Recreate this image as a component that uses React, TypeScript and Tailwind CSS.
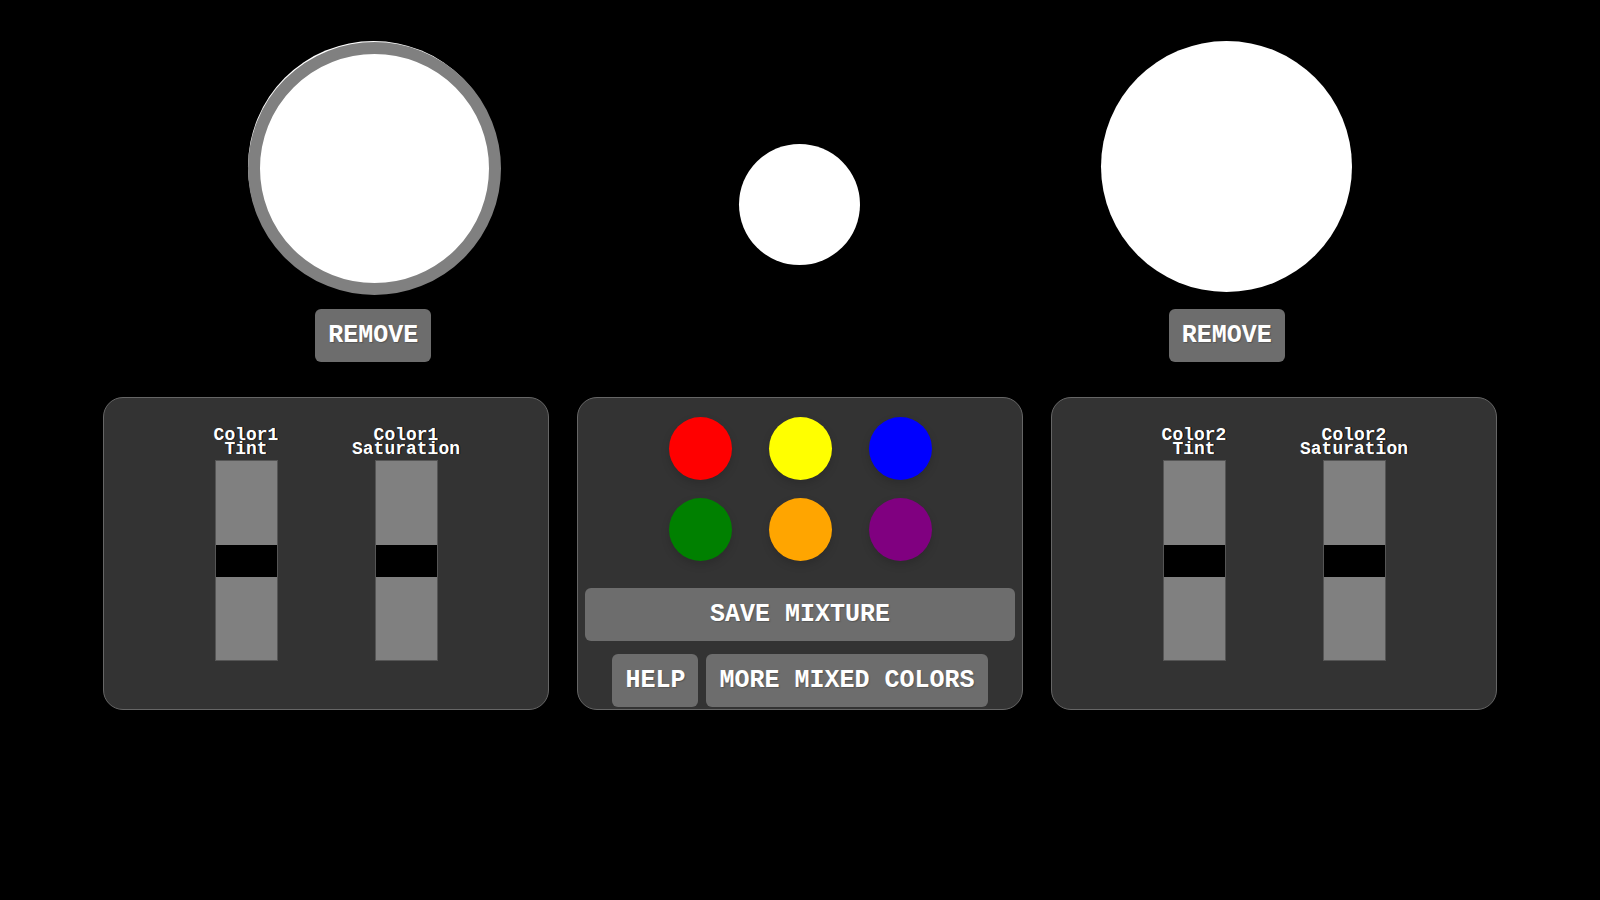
import { useState } from "react";

const buttonStyle =
  "rounded-md bg-[#6d6d6d] px-[13px] py-3 text-center text-[25px] leading-[29px] font-bold text-white uppercase [text-shadow:1px_1px_1px_#555]";

const swatches = [
  { name: "Red", color: "bg-[#ff0000]" },
  { name: "Yellow", color: "bg-[#ffff00]" },
  { name: "Blue", color: "bg-[#0000ff]" },
  { name: "Green", color: "bg-[#008000]" },
  { name: "Orange", color: "bg-[#ffa500]" },
  { name: "Purple", color: "bg-[#800080]" },
];

function ColorDisc({ name, selected, onSelect }: { name: string; selected: boolean; onSelect: () => void }) {
  return (
    <div className="flex flex-col items-center gap-[17px]">
      <button
        type="button"
        aria-label={name}
        aria-pressed={selected}
        onClick={onSelect}
        className="relative size-[251px] rounded-full bg-white"
      >
        {selected && (
          <span className="absolute top-px left-0 size-[253px] rounded-full border-[12px] border-[#808080]" />
        )}
      </button>
      <button type="button" className={buttonStyle}>
        Remove
      </button>
    </div>
  );
}

function VerticalSlider({ id, color, property }: { id: string; color: string; property: string }) {
  return (
    <div className="flex w-40 flex-col items-center gap-1">
      <label
        htmlFor={id}
        className="text-center text-[18px] leading-[14px] font-bold text-white [text-shadow:1px_0_0_#000]"
      >
        {color}
        <br />
        {property}
      </label>
      <input
        id={id}
        type="range"
        min={0}
        max={100}
        defaultValue={50}
        className="h-[201px] w-[63px] appearance-none border border-[#555] bg-[#808080] [writing-mode:vertical-lr] [&::-webkit-slider-thumb]:h-8 [&::-webkit-slider-thumb]:w-[61px] [&::-webkit-slider-thumb]:appearance-none [&::-webkit-slider-thumb]:bg-black"
      />
    </div>
  );
}

const panelStyle = "rounded-[20px] border border-[#666] bg-[#333]";

function SliderPanel({ color, id }: { color: string; id: string }) {
  return (
    <section className={`${panelStyle} flex justify-center pt-[30px]`}>
      <VerticalSlider id={`${id}-tint`} color={color} property="Tint" />
      <VerticalSlider id={`${id}-saturation`} color={color} property="Saturation" />
    </section>
  );
}

export default function App() {
  const [selected, setSelected] = useState(1);

  return (
    <main className="min-h-screen bg-black pt-[41px] font-['Liberation_Mono',monospace]">
      <div className="mx-auto grid w-4/5 grid-cols-3">
        <ColorDisc name="Color 1" selected={selected === 1} onSelect={() => setSelected(1)} />
        <div className="flex justify-center pt-[103px]">
          <div className="size-[121px] rounded-full bg-white" />
        </div>
        <ColorDisc name="Color 2" selected={selected === 2} onSelect={() => setSelected(2)} />
      </div>

      <div className="mt-[35px] grid grid-cols-3 gap-7 px-[103px]">
        <SliderPanel color="Color1" id="color1" />
        <section className={`${panelStyle} flex flex-col items-center px-[7px] pt-[19px] pb-0.5`}>
          <div className="grid grid-cols-3 gap-x-[37px] gap-y-[18px]">
            {swatches.map((swatch) => (
              <button
                key={swatch.name}
                type="button"
                aria-label={swatch.name}
                className={`size-[63px] rounded-full shadow-[0_4px_8px_rgba(0,0,0,0.15)] ${swatch.color}`}
              />
            ))}
          </div>
          <button type="button" className={`${buttonStyle} mt-[27px] w-full`}>
            Save Mixture
          </button>
          <div className="mt-[13px] flex gap-2 whitespace-nowrap">
            <button type="button" className={buttonStyle}>
              Help
            </button>
            <button type="button" className={buttonStyle}>
              More Mixed Colors
            </button>
          </div>
        </section>
        <SliderPanel color="Color2" id="color2" />
      </div>
    </main>
  );
}
